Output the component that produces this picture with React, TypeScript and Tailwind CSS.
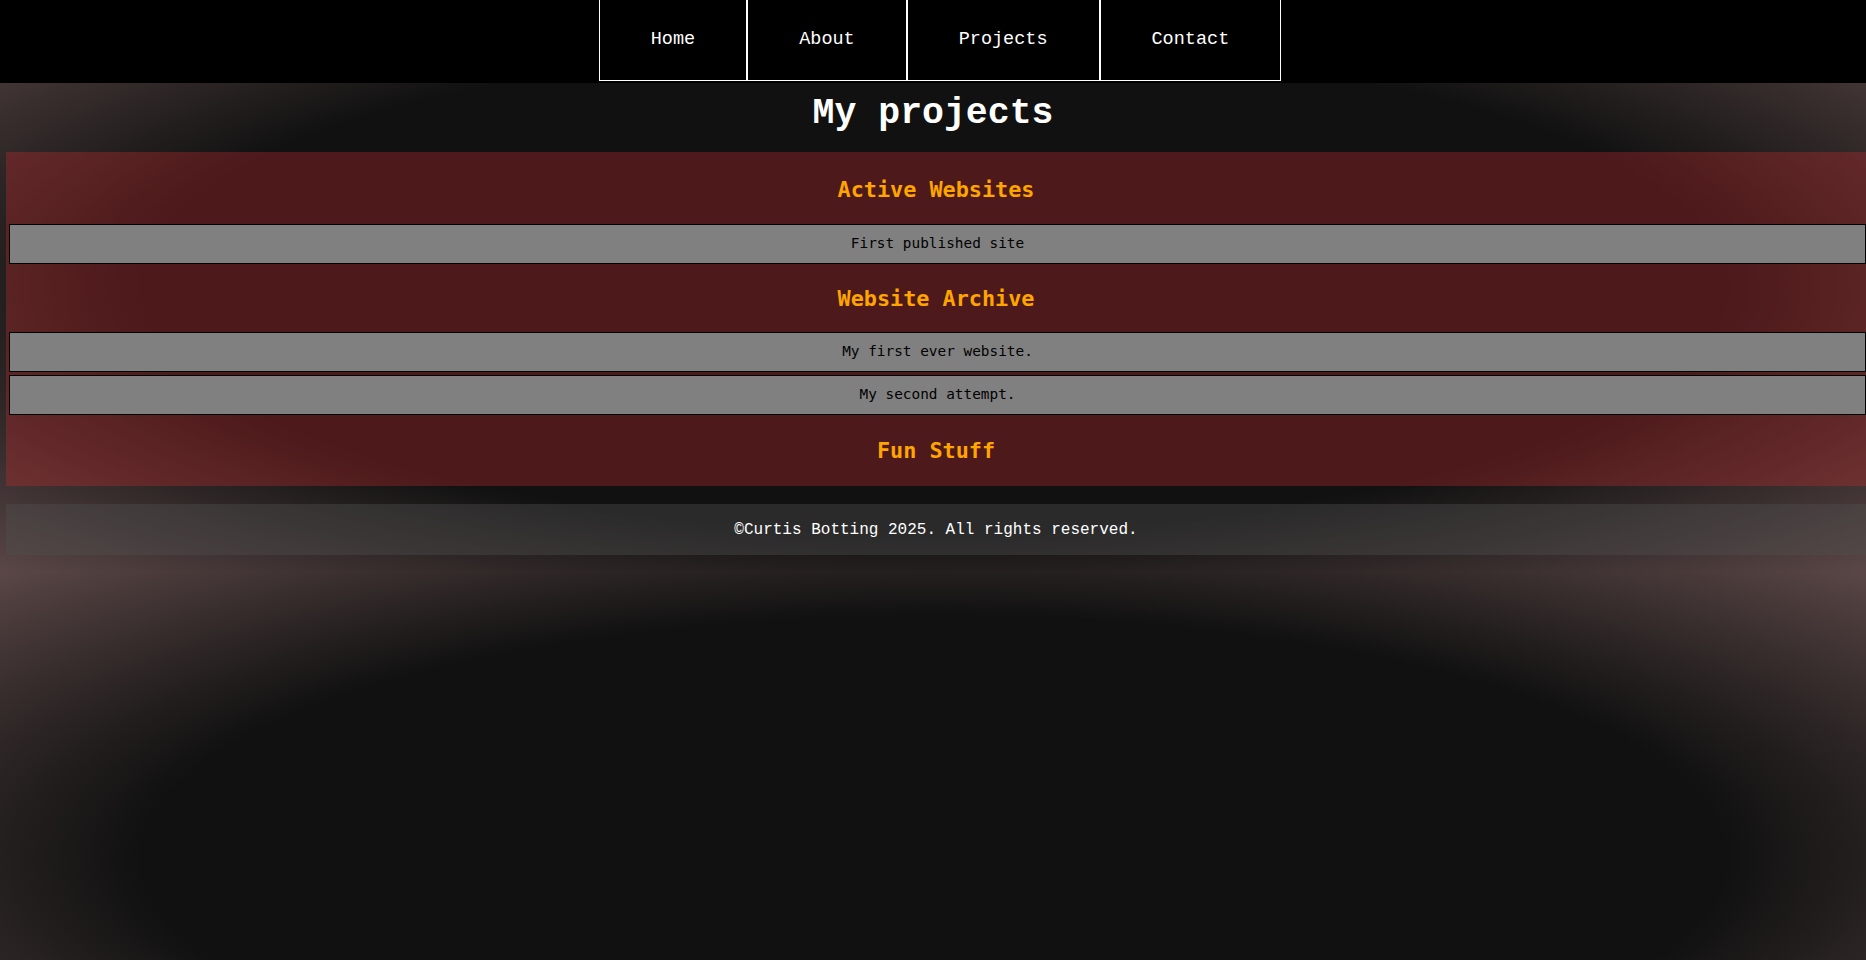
const links = ["Home", "About", "Projects", "Contact"];

const Item = ({ children, className = "" }: { children: string; className?: string }) => (
  <div
    className={
      "ml-[3px] h-[40px] border border-black bg-[#808080] flex items-center justify-center text-[14.4px] text-black " +
      className
    }
  >
    {children}
  </div>
);

const Heading = ({ children, className = "" }: { children: string; className?: string }) => (
  <h2
    className={
      "flex items-center justify-center text-[21.8px] font-bold text-[#ffa500] " + className
    }
  >
    {children}
  </h2>
);

export default function App() {
  return (
    <div className="min-h-screen bg-[radial-gradient(ellipse_at_center,#111111_60%,#5a4646_100%)] bg-[length:100%_572px] font-['DejaVu_Sans_Mono',monospace]">
      <nav className="h-[83px] bg-black flex justify-center pl-[14px]">
        <ul className="flex font-['Liberation_Mono','Courier_New',monospace] text-[18.5px] text-white">
          {links.map((l) => (
            <li
              key={l}
              className="h-[81px] border border-t-0 border-white px-[51px] flex items-center"
            >
              {l}
            </li>
          ))}
        </ul>
      </nav>

      <main>
        <h1 className="pt-[10px] mb-[18px] text-center text-white font-bold text-[36.5px] leading-[41px] font-['Liberation_Mono','Courier_New',monospace]">
          My projects
        </h1>

        <section className="ml-[6px] bg-[rgba(204,45,48,0.32)] flex flex-col">
          <Heading className="h-[72px] pt-[5px]">Active Websites</Heading>
          <Item>First published site</Item>
          <Heading className="h-[68px] pt-[2px]">Website Archive</Heading>
          <Item>My first ever website.</Item>
          <Item className="mt-[3px]">My second attempt.</Item>
          <Heading className="h-[71px] pt-[2px]">Fun Stuff</Heading>
        </section>
      </main>

      <footer className="mt-[18px] ml-[6px] h-[51px] bg-[rgba(80,80,80,0.4)] flex items-center justify-center text-white text-[16px] font-['Liberation_Mono','Courier_New',monospace]">
        ©Curtis Botting 2025. All rights reserved.
      </footer>
    </div>
  );
}
